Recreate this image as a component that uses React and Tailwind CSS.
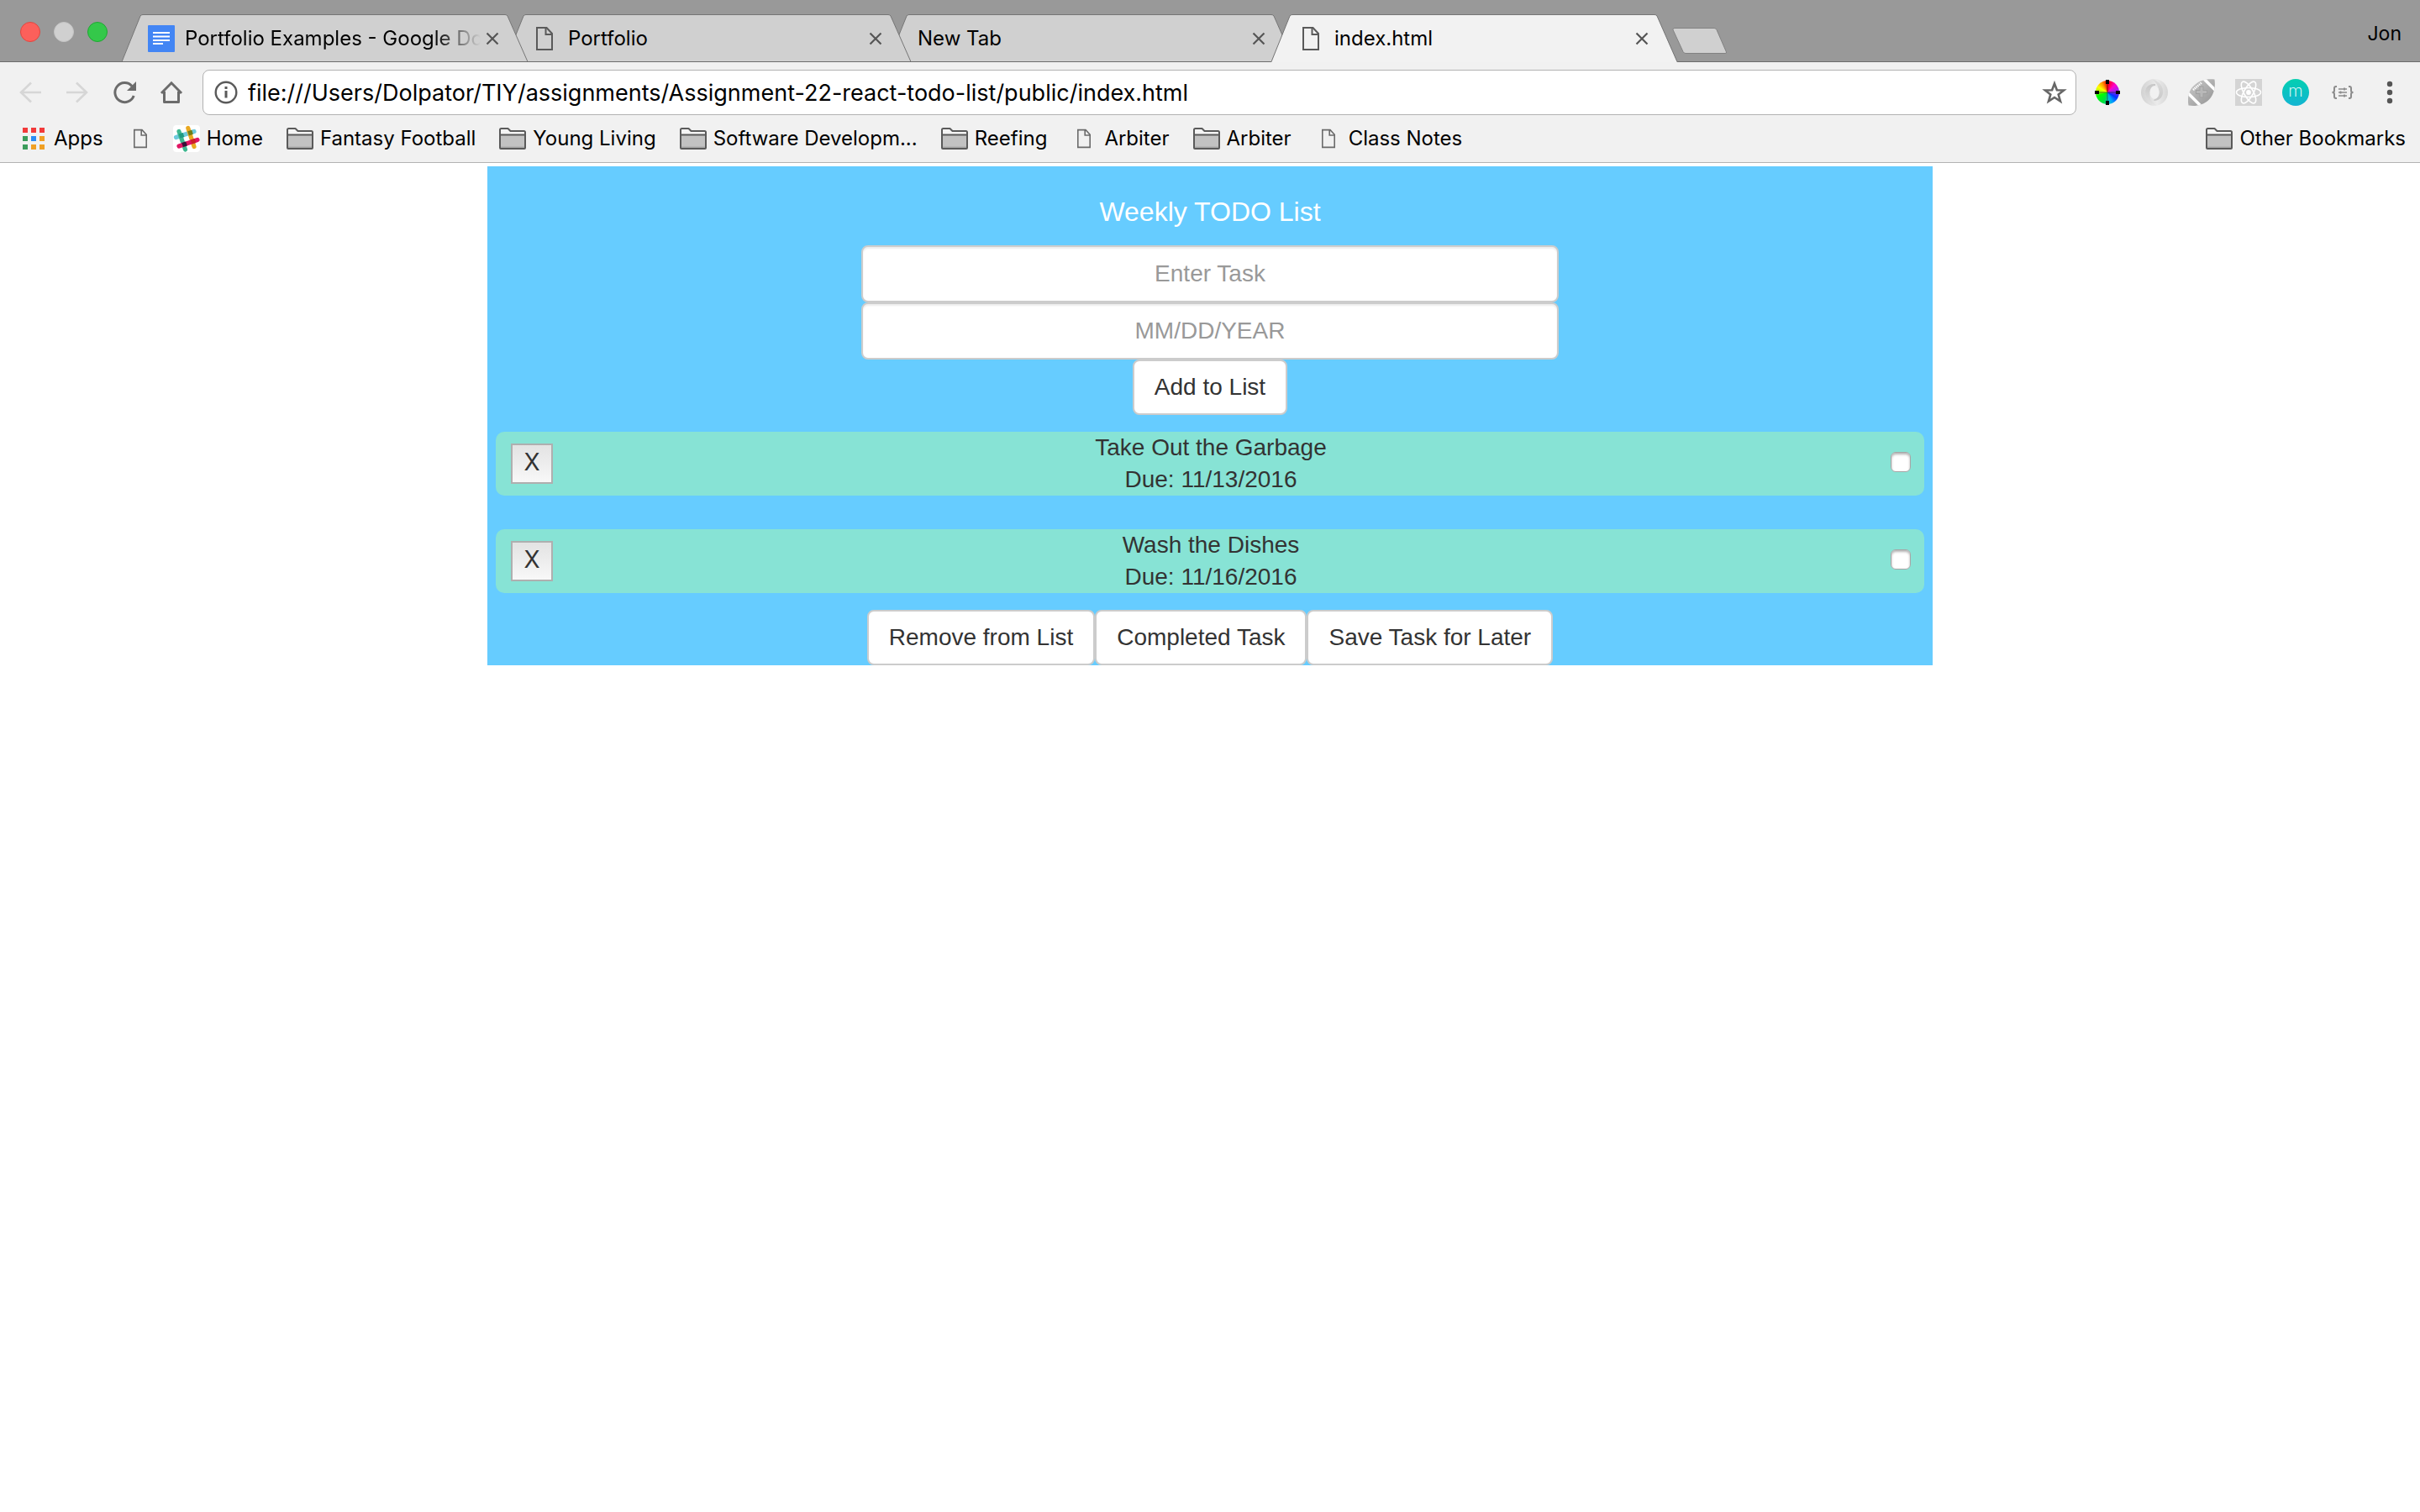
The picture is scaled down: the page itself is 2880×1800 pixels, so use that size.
import React from "react";

const chromeFont = "font-['Inter','Roboto',sans-serif]";
const pageFont = "font-['Liberation_Sans','Helvetica_Neue',Arial,sans-serif]";

function DocIcon({ className, color = "#5a5a5a" }) {
  return (
    <svg className={className} viewBox="0 0 20 28" fill="none" stroke={color} strokeWidth="2" aria-hidden="true">
      <path d="M1 1H12.500L19 8V27H1Z" />
      <path d="M11.500 1V9H19" />
    </svg>
  );
}

function GoogleDocIcon() {
  return (
    <svg className="size-8" viewBox="0 0 32 32" aria-hidden="true">
      <rect width="32" height="32" rx="1" fill="#4285f4" />
      <path d="M6 9H26M6 13.500H26M6 18H26M6 22H18" stroke="#fff" strokeWidth="2" />
    </svg>
  );
}

function FolderIcon() {
  return (
    <svg className="h-[26px] w-8" viewBox="0 0 32 26" aria-hidden="true">
      <path d="M1 24V2.500Q1 1 2.500 1H10.500L13.500 4H29.500Q31 4 31 5.500V24Q31 25 30 25H2Q1 25 1 24Z" fill="#f4f4f4" stroke="#5a5a5a" strokeWidth="2" strokeLinejoin="round" />
      <path d="M2 9H30V24H2Z" fill="#c2c2c2" />
      <path d="M2 22.500H30V24H2Z" fill="#a8a8a8" />
      <path d="M1 8.500H31" stroke="#5a5a5a" strokeWidth="2" />
    </svg>
  );
}

function SlackIcon() {
  return (
    <svg className="size-8" viewBox="0 0 32 32" aria-hidden="true">
      <rect width="32" height="32" rx="4" fill="#fff" />
      <g strokeWidth="5.200" strokeLinecap="round" fill="none">
        <path d="M3.500 14.500L25 7.500" stroke="#6ecadc" />
        <path d="M17.800 3.500L25 25.500" stroke="#e9a820" />
        <path d="M7 7.500L14.500 29" stroke="#3eb890" />
        <path d="M7 25L29 17.500" stroke="#e01563" />
      </g>
      <path d="M6.700 10.600L11.700 9L13.400 14L8.400 15.600Z" fill="#1f9a80" />
      <path d="M17.300 7.300L22.300 5.700L23.800 10.800L18.900 12.400Z" fill="#6f7d16" />
      <path d="M10.200 21L15.200 19.400L16.900 24.400L11.900 26Z" fill="#361238" />
      <path d="M20.800 17.600L25.700 16L27.300 21L22.400 22.600Z" fill="#cc2027" />
    </svg>
  );
}

function AppsIcon() {
  const colors = ["#f23a3a", "#f23a3a", "#f23a3a", "#3b9c5b", "#2a8cf4", "#f0a024", "#3b9c5b", "#f0a024", "#f0a024"];
  return (
    <svg className="h-[26px] w-8" viewBox="0 0 32 26" aria-hidden="true">
      {colors.map((c, i) => (
        <rect key={i} x={3 + (i % 3) * 10} y={Math.floor(i / 3) * 10} width="6" height="6" fill={c} />
      ))}
    </svg>
  );
}

function TabShape({ active }) {
  const edge = "M0 57.500L22 3Q23 1.500 25 1.500H456Q458 1.500 459 3L483 57.500";
  return (
    <svg className="absolute inset-0 h-full w-full" viewBox="0 0 483 58" aria-hidden="true">
      <path d={active ? "M0 58L22 3Q23 1.500 25 1.500H456Q458 1.500 459 3L483 58Z" : "M0 57L22 3Q23 1.500 25 1.500H456Q458 1.500 459 3L483 57Z"} fill={active ? "#f2f2f2" : "#d0d0d0"} />
      <path d={edge} fill="none" stroke="#757575" strokeWidth="1" />
    </svg>
  );
}

function Tab({ title, icon, active, layer, fade }) {
  return (
    <div className={`relative -ml-[27px] flex h-[58px] w-[483px] items-center pt-0.5 pr-8 pl-[31px] first:ml-0 ${layer}`}>
      <TabShape active={active} />
      <button type="button" role="tab" aria-selected={!!active} className="relative flex min-w-0 flex-1 items-center gap-2 text-left">
        {icon}
        <span className={`min-w-0 flex-1 overflow-hidden pl-1 text-2xl/8 whitespace-nowrap ${fade ? "[mask-image:linear-gradient(to_right,black_calc(100%_-_56px),transparent)]" : ""}`}>
          {title}
        </span>
      </button>
      <button type="button" aria-label={`Close ${title}`} className="relative ml-1 shrink-0 p-0.5">
        <svg className="size-4" viewBox="0 0 16 16" stroke="#555" strokeWidth="2.200" aria-hidden="true">
          <path d="M1.500 1.500L14.500 14.500M14.500 1.500L1.500 14.500" />
        </svg>
      </button>
    </div>
  );
}

function TabBar() {
  const doc = (
    <span className="flex w-8 justify-center">
      <DocIcon className="h-7 w-5" />
    </span>
  );
  return (
    <header className="isolate flex h-[74px] items-end bg-[#999] pl-6 shadow-[inset_0_-1px_0_#6c6c6c]">
      <div className="mb-6 flex gap-4">
        <button type="button" aria-label="Close window" className="size-6 rounded-full border border-[#e2463f] bg-[#fc605b]" />
        <button type="button" aria-label="Minimize window" className="size-6 rounded-full border border-[#c4c4c4] bg-[#d0d0d0]" />
        <button type="button" aria-label="Zoom window" className="size-6 rounded-full border border-[#1fa833] bg-[#34c84a]" />
      </div>
      <div role="tablist" className="ml-[17px] flex">
        <Tab title="Portfolio Examples - Google Docs" icon={<GoogleDocIcon />} fade layer="z-30" />
        <Tab title="Portfolio" icon={doc} layer="z-20" />
        <Tab title="New Tab" layer="z-10" />
        <Tab title="index.html" icon={doc} active layer="z-40" />
      </div>
      <button type="button" aria-label="New tab" className="mb-2 -ml-1.5">
        <svg className="h-[34px] w-[66px]" viewBox="0 0 66 34" aria-hidden="true">
          <path d="M3 1.500H50Q52 1.500 53 3.500L64.500 30Q65 31.500 63 31.500H16Q14 31.500 13 29.500L1 3.500Q0.500 1.500 3 1.500Z" fill="#d0d0d0" stroke="#828282" />
        </svg>
      </button>
      <button type="button" className="mr-[22px] mb-[18px] ml-auto text-[23px]/8">Jon</button>
    </header>
  );
}

const navIcons = [
  {
    label: "Back",
    art: <path d="M14 1.500L2 13L14 24.500M2 13H26" stroke="#d6d6d6" strokeWidth="2.600" fill="none" />,
  },
  {
    label: "Forward",
    art: <path d="M12 1.500L24 13L12 24.500M0 13H24" stroke="#d6d6d6" strokeWidth="2.600" fill="none" />,
  },
  {
    label: "Reload",
    art: (
      <>
        <path d="M22 5.500A11.500 11.500 0 1 0 24.200 17" stroke="#6b6b6b" strokeWidth="3" fill="none" />
        <path d="M27 0V11H16Z" fill="#6b6b6b" />
      </>
    ),
  },
  {
    label: "Home",
    art: (
      <>
        <path d="M1 14L13 1.800L25 14" stroke="#6b6b6b" strokeWidth="3" fill="none" />
        <path d="M4.500 12V24.500H21.500V12" stroke="#6b6b6b" strokeWidth="3" fill="none" strokeLinejoin="round" />
      </>
    ),
  },
];

function ColorWheel() {
  return (
    <span className="relative flex size-[30px] items-center justify-center">
      <span className="size-[28px] rounded-full bg-[conic-gradient(#f00,#f0c_45deg,#a020f0_80deg,#03f_120deg,#09f_150deg,#0cc_175deg,#0d4_200deg,#0f0_250deg,#af0_275deg,#ff0_300deg,#f90_330deg,#f00)]" />
      <svg className="absolute inset-0 size-full" viewBox="0 0 30 30" aria-hidden="true">
        <path d="M15 2V28M2 15H28" stroke="#222" strokeWidth="1" opacity=".6" />
        <path d="M15 0V5M15 25V30M0 15H5M25 15H30" stroke="#000" strokeWidth="4" />
      </svg>
    </span>
  );
}

function JsonRing() {
  return (
    <svg className="size-8" viewBox="0 0 32 32" aria-hidden="true">
      <defs>
        <linearGradient id="ringBase" x1="0" y1="0" x2="1" y2="0">
          <stop offset="0" stopColor="#d2d2d2" />
          <stop offset=".6" stopColor="#ebebeb" />
          <stop offset="1" stopColor="#d6d6d6" />
        </linearGradient>
        <linearGradient id="ringSweep" x1="0" y1="0" x2="0" y2="1">
          <stop offset="0" stopColor="#c6c6c6" />
          <stop offset="1" stopColor="#e4e4e4" />
        </linearGradient>
        <linearGradient id="ringReturn" x1="0" y1="0" x2="0" y2="1">
          <stop offset="0" stopColor="#dedede" />
          <stop offset="1" stopColor="#c8c8c8" />
        </linearGradient>
      </defs>
      <circle cx="16" cy="16" r="16" fill="url(#ringBase)" />
      <path d="M17 6C8 5 3 12 6 20C8 26 12 30 19 31.700C12 28 9 22 10.500 16C11.500 11 14 8.500 17 8Z" fill="url(#ringSweep)" />
      <path d="M13 0.300C20 2 25 7 26 13C27 20 23 26 15 26L16 24C20 23 22 19 21.500 15C20.500 8 18 4 13 0.300Z" fill="url(#ringReturn)" />
      <ellipse cx="16" cy="16" rx="5.500" ry="7.800" fill="#f1f1f1" />
    </svg>
  );
}

function Football() {
  return (
    <svg className="size-8" viewBox="0 0 32 32" aria-hidden="true">
      <defs>
        <linearGradient id="ball" x1="0" y1="0" x2="1" y2="1">
          <stop offset="0.100" stopColor="#c6c6c6" />
          <stop offset="0.900" stopColor="#989898" />
        </linearGradient>
        <clipPath id="ballClip">
          <path d="M0.500 31.500C-1.500 20 2 12 8 7C14 1.500 22 -0.500 31.500 0.500C33 11 30 20 24 25.500C18 31 9 33 0.500 31.500Z" />
        </clipPath>
      </defs>
      <g clipPath="url(#ballClip)" fill="none">
        <rect width="32" height="32" fill="url(#ball)" />
        <path d="M18 -1L33 14M-1 16L15 32" stroke="#fff" strokeWidth="3.600" />
        <path d="M6 13L16 4.500" stroke="#fff" strokeWidth="2.600" strokeDasharray="1.400 0.900" />
        <path d="M16 8.500V22.500M9 15.500H23" stroke="#a0a0a0" strokeWidth="5" />
        <path d="M16 9.500V21.500M10 15.500H22" stroke="#b8b8b8" strokeWidth="3" />
      </g>
    </svg>
  );
}

function ReactLogo() {
  return (
    <svg className="size-8" viewBox="0 0 32 32" aria-hidden="true">
      <rect width="32" height="32" fill="#d4d4d4" />
      <g fill="none" stroke="#fff" strokeWidth="1.600">
        <ellipse cx="16" cy="16" rx="14.500" ry="5.500" />
        <ellipse cx="16" cy="16" rx="14.500" ry="5.500" transform="rotate(60 16 16)" />
        <ellipse cx="16" cy="16" rx="14.500" ry="5.500" transform="rotate(120 16 16)" />
      </g>
      <circle cx="16" cy="16" r="2.900" fill="#fff" />
    </svg>
  );
}

function Braces() {
  return (
    <svg className="h-4 w-[26px]" viewBox="0 0 26 16" fill="none" stroke="#8c8c8c" aria-hidden="true">
      <path d="M6 1H5Q3 1 3 3V6Q3 8 0.500 8Q3 8 3 10V13Q3 15 5 15H6" strokeWidth="2" />
      <path d="M20 1H21Q23 1 23 3V6Q23 8 25.500 8Q23 8 23 10V13Q23 15 21 15H20" strokeWidth="2" />
      <path d="M8 4H18M8 8H18M8 12H18" strokeWidth="1.300" />
      <path d="M15 2.500V5.500M10.500 6.500V9.500M15 10.500V13.500" strokeWidth="1.800" />
    </svg>
  );
}

const extensions = [
  { label: "Color picker", art: <ColorWheel /> },
  { label: "JSON viewer", art: <JsonRing /> },
  { label: "Fantasy football", art: <Football /> },
  { label: "React tools", art: <ReactLogo /> },
  {
    label: "Momentum",
    art: (
      <span className="flex size-8 items-center justify-center rounded-full bg-linear-to-b from-[#06cfb0] to-[#14b4d2] pb-1 text-xl/6 font-extralight text-white">m</span>
    ),
  },
  { label: "Format", art: <Braces /> },
  {
    label: "Menu",
    art: (
      <svg className="h-7 w-2" viewBox="0 0 8 28" fill="#555" aria-hidden="true">
        <circle cx="4" cy="4" r="3.200" />
        <circle cx="4" cy="14" r="3.200" />
        <circle cx="4" cy="24" r="3.200" />
      </svg>
    ),
  },
];

function Toolbar() {
  return (
    <div className="flex items-center px-2 pt-[9px]">
      {navIcons.map((n) => (
        <button key={n.label} type="button" aria-label={n.label} className="flex w-14 justify-center">
          <svg className="h-[26px] w-[27px] overflow-visible" viewBox="0 0 27 26" aria-hidden="true">{n.art}</svg>
        </button>
      ))}
      <div className="mx-[9px] flex h-[54px] min-w-0 flex-1 items-center rounded-lg border border-[#b2b2b2] bg-white pr-2.5 pl-[13px]">
        <svg className="size-7 shrink-0" viewBox="0 0 28 28" aria-hidden="true">
          <circle cx="14" cy="14" r="12.300" fill="none" stroke="#5a5a5a" strokeWidth="2.400" />
          <path d="M14 7V10M14 12V20.500" stroke="#5a5a5a" strokeWidth="3" />
        </svg>
        <input
          type="text"
          aria-label="Address"
          defaultValue="file:///Users/Dolpator/TIY/assignments/Assignment-22-react-todo-list/public/index.html"
          className="ml-3 h-10 min-w-0 flex-1 pt-0.5 text-[27px] text-black outline-none"
        />
        <button type="button" aria-label="Bookmark this page">
          <svg className="size-[30px]" viewBox="0 0 30 30" fill="none" stroke="#666" strokeWidth="2.600" aria-hidden="true">
            <path d="M15 4.500L17.900 12.200L26.200 12.500L19.700 17.600L22 25.600L15 21L8 25.600L10.300 17.600L3.800 12.500L12.100 12.200Z" />
          </svg>
        </button>
      </div>
      {extensions.map((e) => (
        <button key={e.label} type="button" aria-label={e.label} className="flex w-14 justify-center">
          {e.art}
        </button>
      ))}
    </div>
  );
}

const smallDoc = (
  <span className="flex w-8 justify-center">
    <DocIcon className="h-6 w-4" color="#6b6b6b" />
  </span>
);

const bookmarks = [
  { text: "Apps", icon: <AppsIcon /> },
  { text: "", icon: smallDoc },
  { text: "Home", icon: <SlackIcon /> },
  { text: "Fantasy Football", icon: <FolderIcon /> },
  { text: "Young Living", icon: <FolderIcon /> },
  { text: "Software Developm...", icon: <FolderIcon /> },
  { text: "Reefing", icon: <FolderIcon /> },
  { text: "Arbiter", icon: smallDoc },
  { text: "Arbiter", icon: <FolderIcon /> },
  { text: "Class Notes", icon: smallDoc },
];

function Bookmark({ text, icon }) {
  return (
    <a href="#" aria-label={text || "Untitled bookmark"} className="flex items-center gap-2 whitespace-nowrap">
      {icon}
      {text && <span className="pr-[5px]">{text}</span>}
    </a>
  );
}

function BookmarksBar() {
  return (
    <nav className="flex h-[57px] items-center gap-[23px] border-b border-[#b2b2b2] pr-3 pl-6 text-2xl/8">
      {bookmarks.map((b, i) => (
        <Bookmark key={i} {...b} />
      ))}
      <div className="ml-auto">
        <Bookmark text="Other Bookmarks" icon={<FolderIcon />} />
      </div>
    </nav>
  );
}

const tasks = [
  { name: "Take Out the Garbage", due: "11/13/2016" },
  { name: "Wash the Dishes", due: "11/16/2016" },
];

const field =
  "h-[68px] w-[830px] max-w-full rounded-lg border-2 border-[#ccc] bg-white px-6 text-center text-[#333] shadow-[inset_0_2px_2px_rgba(0,0,0,0.075)] outline-none placeholder:text-[#999]";

function PageButton({ children }) {
  return (
    <button type="button" className="h-[66px] rounded-lg border-2 border-[#ccc] bg-white px-6">
      {children}
    </button>
  );
}

function TaskRow({ name, due }) {
  return (
    <li className="grid grid-cols-[1fr_auto_1fr] items-center rounded-[10px] bg-[#87e3d5] pr-4 pl-[18px]">
      <button
        type="button"
        aria-label={`Remove ${name}`}
        className={`flex h-12 w-[50px] justify-center border-2 border-[#afafaf] bg-linear-to-b from-[#e3e3e3] to-[#f8f8f8] leading-10 ${chromeFont}`}
      >
        X
      </button>
      <div>
        <p>{name}</p>
        <p>Due: {due}</p>
      </div>
      <input
        type="checkbox"
        aria-label={name}
        className="mt-6 size-6 appearance-none self-start justify-self-end rounded-md border border-[#a6a6a6] bg-white shadow-[inset_0_2px_3px_rgba(0,0,0,0.3)]"
      />
    </li>
  );
}

function TodoPage() {
  return (
    <main className={`mx-auto mt-1 w-full max-w-[1720px] bg-[#66ccff] text-center text-[28px]/[38px] text-[#333] ${pageFont}`}>
      <form className="flex flex-col items-center" onSubmit={(e) => e.preventDefault()}>
        <h1 className="pt-9 pb-[22px] text-[32px]/9 text-white">Weekly TODO List</h1>
        <input type="text" aria-label="Task" placeholder="Enter Task" className={field} />
        <input type="text" aria-label="Due date" placeholder="MM/DD/YEAR" className={field} />
        <PageButton>Add to List</PageButton>
      </form>
      <ul className="flex flex-col gap-10 px-2.5 py-5">
        {tasks.map((t) => (
          <TaskRow key={t.name} {...t} />
        ))}
      </ul>
      <div className="flex justify-center">
        <PageButton>Remove from List</PageButton>
        <PageButton>Completed Task</PageButton>
        <PageButton>Save Task for Later</PageButton>
      </div>
    </main>
  );
}

export default function App() {
  return (
    <div className={`min-h-screen bg-white text-black ${chromeFont}`}>
      <TabBar />
      <div className="bg-[#f1f1f1]">
        <Toolbar />
        <BookmarksBar />
      </div>
      <TodoPage />
    </div>
  );
}
